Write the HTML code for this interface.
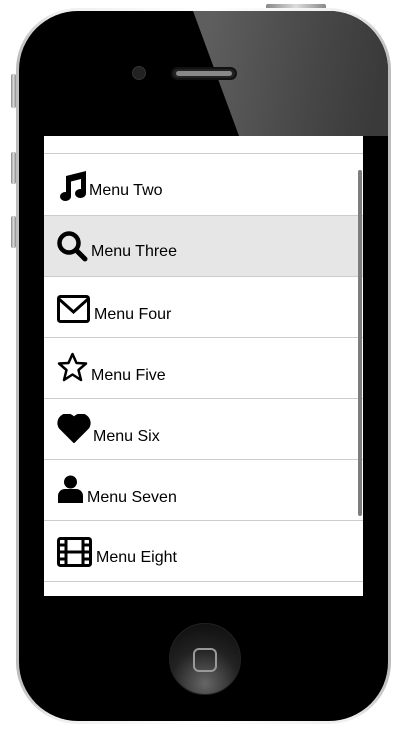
<!DOCTYPE html>
<html><head><style>
*{margin:0;padding:0;box-sizing:border-box}
body{width:415px;height:733px;background:#fff;position:relative;overflow:hidden;font-family:"Liberation Sans",Arial,sans-serif}
.phone{position:absolute;left:16px;top:8px;width:375px;height:716px;border-radius:62px;background:linear-gradient(90deg,#bbb,#eee 10%,#fff 50%,#eee 90%,#bbb);}
.body{position:absolute;left:19px;top:11px;width:369px;height:710px;border-radius:59px;background:#000;overflow:hidden}
.glare{position:absolute;left:0;top:0;width:369px;height:200px;background:linear-gradient(100deg,#5e5e5e 0,#5e5e5e 190px,#474747 300px,#3a3a3a 369px);clip-path:polygon(174px 0,369px 0,369px 125px,220px 125px)}
.btn{position:absolute;background:linear-gradient(90deg,#888,#ddd,#888)}
.screen{position:absolute;left:44px;top:136px;width:319px;height:460px;background:#fff;overflow:hidden}
.row{position:absolute;left:0;width:319px;height:61px;border-bottom:1px solid #ccc}
.row svg{position:absolute;left:13px}
.row span{position:absolute;font-size:16px;color:#000;line-height:18px}
.sb{position:absolute;left:314px;top:34px;width:4px;height:346px;background:#7d7d7d;border-radius:2px}
.home{position:absolute;left:169px;top:623px;width:72px;height:72px;border-radius:50%;background:radial-gradient(circle at 50% 85%,#666,#222 50%,#0a0a0a);border:1px solid #222}
.home i{position:absolute;left:23px;top:24px;width:24px;height:24px;border:2px solid #999;border-radius:6px}
</style></head><body>
<div class="btn" style="left:266px;top:4px;width:60px;height:5px;border-radius:2px"></div>
<div class="btn" style="left:11px;top:74px;width:5px;height:34px;border-radius:2px"></div>
<div class="btn" style="left:11px;top:152px;width:5px;height:32px;border-radius:2px"></div>
<div class="btn" style="left:11px;top:216px;width:5px;height:32px;border-radius:2px"></div>
<div class="phone"></div>
<div class="body"><div class="glare"></div>
<div style="position:absolute;left:113px;top:55px;width:14px;height:14px;border-radius:50%;background:#222;border:1px solid #333"></div>
<div style="position:absolute;left:152px;top:56px;width:66px;height:13px;border-radius:7px;background:#222;border:2px solid #111"><div style="margin:2px 3px;height:5px;border-radius:3px;background:#888"></div></div>
</div>
<div class="screen">
<div class="row" style="top:-43px"></div>
<div class="row" style="top:19px">
<svg style="top:16px" width="30" height="30" viewBox="0 0 30 30"><path d="M9 5 L29 0 V22 A5.5 4.5 0 1 1 24 18 V8 L14 10.5 V25 A5.5 4.5 0 1 1 9 21Z"/></svg><span style="left:45px;top:27px">Menu Two</span></div>
<div class="row" style="top:80px;background:#e6e6e6">
<svg style="top:15px" width="31" height="31" viewBox="0 0 31 31"><circle cx="12" cy="12" r="9.5" fill="none" stroke="#000" stroke-width="4.5"/><path d="M19 19 L28 28" stroke="#000" stroke-width="5" stroke-linecap="round"/></svg><span style="left:47px;top:27px">Menu Three</span></div>
<div class="row" style="top:141px">
<svg style="top:18px" width="33" height="28" viewBox="0 0 33 28"><rect x="1.5" y="1.5" width="30" height="25" rx="2" fill="none" stroke="#000" stroke-width="3"/><path d="M2 4 L16.5 17 L31 4" fill="none" stroke="#000" stroke-width="3"/></svg><span style="left:50px;top:29px">Menu Four</span></div>
<div class="row" style="top:202px">
<svg style="top:14px" width="31" height="30" viewBox="0 0 31 30"><path d="M15.5 2 L19.5 11 L29 11.5 L21.5 18 L24 28 L15.5 22.5 L7 28 L9.5 18 L2 11.5 L11.5 11Z" fill="none" stroke="#000" stroke-width="2.5" stroke-linejoin="round"/></svg><span style="left:47px;top:29px">Menu Five</span></div>
<div class="row" style="top:263px">
<svg style="top:15px" width="34" height="29" viewBox="0 0 34 29"><path d="M17 28 L3 14 A8 8 0 0 1 17 4 A8 8 0 0 1 31 14Z" stroke="#000" stroke-width="2"/></svg><span style="left:49px;top:29px">Menu Six</span></div>
<div class="row" style="top:324px">
<svg style="top:15px" width="27" height="29" viewBox="0 0 27 29"><circle cx="13.5" cy="7" r="6.5"/><path d="M1 28 V21 A7 7 0 0 1 8 14 H19 A7 7 0 0 1 26 21 V28Z"/></svg><span style="left:43px;top:29px">Menu Seven</span></div>
<div class="row" style="top:385px">
<svg style="top:16px" width="35" height="30" viewBox="0 0 35 30"><rect x="1.5" y="1.5" width="32" height="27" rx="2" fill="none" stroke="#000" stroke-width="3"/><path d="M9 1 V29 M26 1 V29 M9 15 H26 M1 8 H9 M1 15 H9 M1 22 H9 M26 8 H34 M26 15 H34 M26 22 H34" stroke="#000" stroke-width="3"/></svg><span style="left:52px;top:28px">Menu Eight</span></div>
<div class="sb"></div>
</div>
<div class="home"><i></i></div>
</body></html>
